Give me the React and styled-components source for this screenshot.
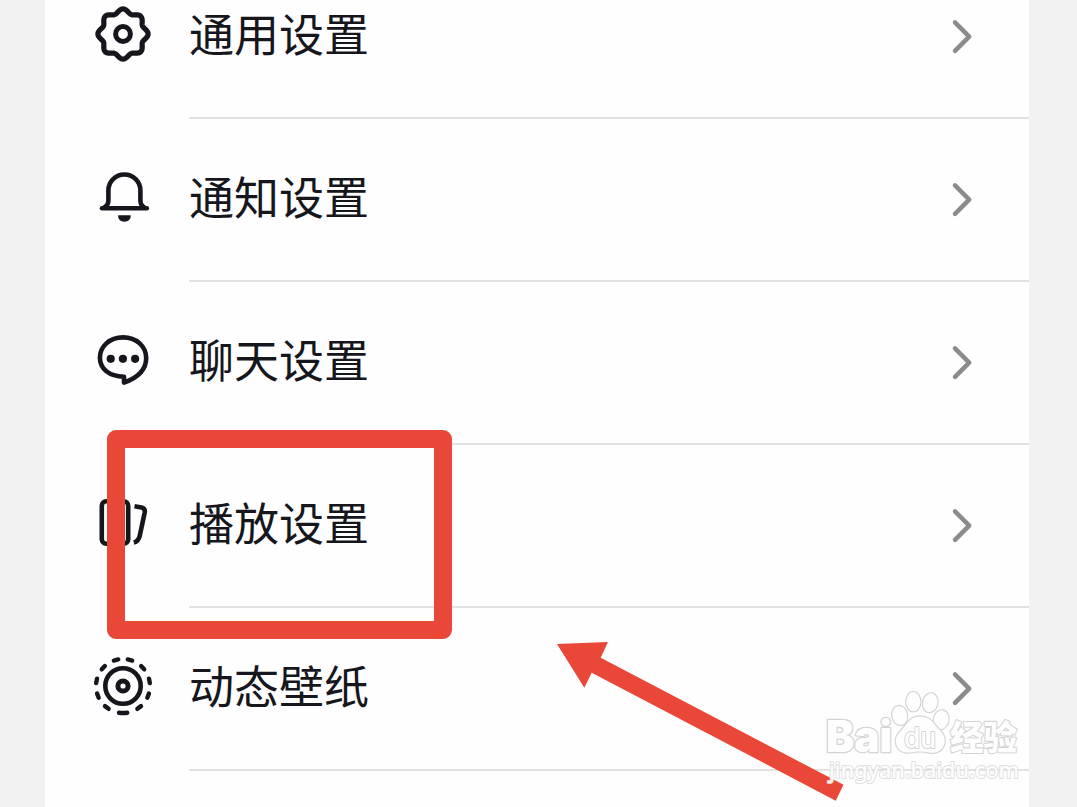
import React from 'react';
import styled, { createGlobalStyle } from 'styled-components';

const INK = '#16161d';
const RED = '#e94738';

const GlobalStyle = createGlobalStyle`
  body {
    margin: 0;
    background-color: #f2f2f2;
  }
`;

const Screen = styled.div`
  position: relative;
  box-sizing: border-box;
  width: 1077px;
  height: 807px;
  padding: 0 48px 0 45px;
  overflow: hidden;
  background-color: #f2f2f2;
`;

const Panel = styled.main`
  height: 100%;
  overflow: hidden;
  background-color: #fefefe;
`;

// the list is scrolled a bit, so the first row is cut by the top edge
const List = styled.ul`
  list-style-type: none;
  margin: -44px 0 0;
  padding: 0;
`;

const ListItem = styled.li`
  display: flex;
  align-items: center;
  height: 163px;
  padding-left: 48px;
`;

const IconSlot = styled.div`
  flex: none;
  width: 60px;
  height: 61px;
  margin: 0 36px 2px 0;

  svg {
    display: block;
    overflow: visible;
  }
`;

const Content = styled.div`
  box-sizing: border-box;
  display: flex;
  flex: 1;
  align-items: center;
  justify-content: space-between;
  height: 100%;
  padding: 0 56px 0 0;
  border-bottom: 2px solid #e2e2e2;
`;

const Label = styled.span`
  margin-bottom: 7px;
  color: ${INK};
  font-family: "Noto Sans CJK SC", sans-serif;
  font-size: 45px;
  line-height: 60px;
`;

const Overlay = styled.svg`
  position: absolute;
  top: 0;
  left: 0;
  pointer-events: none;
`;

const Highlight = styled.div`
  position: absolute;
  top: 430px;
  left: 107px;
  box-sizing: border-box;
  width: 345px;
  height: 209px;
  border: 18px solid ${RED};
  border-radius: 9px;
`;

const polar = (r, deg) => {
  const a = (deg * Math.PI) / 180;
  return [30 + r * Math.cos(a), 28 + r * Math.sin(a)];
};

const gearPoints = Array.from({ length: 180 }, (_, i) => {
  const deg = i * 2;
  return polar(23.1 + 2 * Math.cos((8 * deg * Math.PI) / 180), deg)
    .map(n => n.toFixed(2))
    .join(',');
}).join(' ');

const Icon = ({ children }) => (
  <svg width="60" height="61" viewBox="0 0 60 61" fill="none" stroke={INK}
      strokeWidth="4.6" strokeLinecap="round" strokeLinejoin="round">
    {children}
  </svg>
);

const GearIcon = () => (
  <Icon>
    <polygon points={gearPoints} strokeWidth="5.2" />
    <circle cx="30" cy="28" r="7.4" strokeWidth="5" />
  </Icon>
);

const BellIcon = () => (
  <Icon>
    <path d="M9 39.2H53.8" />
    <path d="M11 38.5Q15.4 36.5 15.4 31.5V21.5A16 16 0 0 1 47.4 21.5V31.5Q47.4 36.5 51.5 38.5" />
    <path d="M25.2 46.3H37.6C38.2 50.3 35 52.7 31.4 52.7S24.6 50.3 25.2 46.3Z" fill={INK} stroke="none" />
  </Icon>
);

const ChatIcon = () => (
  <Icon>
    <path d="M30 5.4C16.5 5.4 6.9 14.5 6.9 25.8C6.9 36.8 16 44.3 31 44.8V50.6C44 46 53.2 38 53.2 26C53.2 14.5 43.5 5.4 30 5.4Z" />
    <g fill={INK} stroke="none">
      <circle cx="17.7" cy="26.8" r="4.1" />
      <circle cx="29.9" cy="26.8" r="4.1" />
      <circle cx="42.1" cy="26.8" r="4.1" />
    </g>
  </Icon>
);

const PlaybackIcon = () => (
  <Icon>
    <rect x="8.8" y="6.2" width="26.4" height="42.6" rx="4.5" />
    <path d="M41.5 11.2L48.5 12.4Q52.4 13.5 51.7 17.5L46.8 40.5Q45.5 46.5 40.8 47.6" strokeLinecap="butt" />
  </Icon>
);

const dashAngles = [-75, -43, -11, 21, 53, 127, 159, 191, 223, 255];

const WallpaperIcon = () => (
  <Icon>
    <circle cx="30" cy="28" r="17.7" strokeWidth="4.6" />
    <circle cx="30" cy="28" r="5.1" strokeWidth="5" />
    {dashAngles.map(deg => {
      const [x1, y1] = polar(27, deg - 4.8);
      const [x2, y2] = polar(27, deg + 4.8);
      return <path key={deg} d={`M${x1} ${y1}L${x2} ${y2}`} strokeWidth="4.4" />;
    })}
    <path d="M26 54.7Q30 55.2 34.2 54.7" strokeWidth="4.4" />
  </Icon>
);

const Chevron = () => (
  <svg width="22" height="36" viewBox="0 0 22 36" fill="none" stroke="#8b8b8b"
      strokeWidth="4.5" strokeLinecap="round" strokeLinejoin="round">
    <path d="M4 3.4L18.2 17.6L4 31.8" />
  </svg>
);

// fills sit on top of the strokes, so only a thin outer line is left
const Watermark = () => (
  <g fill="#fff" stroke="#d0d0d0" strokeWidth="2.6" strokeLinejoin="round" paintOrder="stroke" opacity="0.9">
    <g strokeWidth="2.4">
      <ellipse cx="899.7" cy="715.5" rx="7.4" ry="9.5" transform="rotate(-12 899.7 715.5)" />
      <ellipse cx="913.3" cy="701.7" rx="7" ry="9.6" />
      <ellipse cx="930.2" cy="702.7" rx="7.2" ry="9.4" transform="rotate(12 930.2 702.7)" />
      <ellipse cx="941.2" cy="719.7" rx="7.3" ry="9.4" transform="rotate(10 941.2 719.7)" />
      <path d="M919.5 716.5C911 716.5 907.5 723 903 728.5C898 734 895 737 896 743C897.5 752 906 753.5 912 752.2C917 751 924 751.3 929 752.5C937 754 944.5 750 944.7 741C944.8 733 939 730 935.5 725.5C932 720.5 928 716.5 919.5 716.5Z" />
    </g>
    <text x="826" y="751.5" fontSize="44" fontWeight="900" textLength="66" lengthAdjust="spacingAndGlyphs"
        fontFamily="Inter, sans-serif">Bai</text>
    <text x="904" y="747.5" fontSize="28" fontWeight="500" textLength="32" lengthAdjust="spacingAndGlyphs"
        strokeWidth="2" fontFamily="Inter, sans-serif">du</text>
    <text x="950" y="749.5" fontSize="34" fontWeight="900" textLength="67" lengthAdjust="spacingAndGlyphs"
        strokeWidth="2.2" fontFamily="Noto Sans CJK SC, sans-serif">经验</text>
    <text x="829" y="777.5" fontSize="22.5" fontWeight="500" textLength="190" lengthAdjust="spacingAndGlyphs"
        strokeWidth="2" stroke="#dcdcdc" fontFamily="Noto Sans, sans-serif">jingyan.baidu.com</text>
  </g>
);

const items = [
  { label: '通用设置', icon: GearIcon },
  { label: '通知设置', icon: BellIcon },
  { label: '聊天设置', icon: ChatIcon },
  { label: '播放设置', icon: PlaybackIcon },
  { label: '动态壁纸', icon: WallpaperIcon },
];

const renderListItem = ({ label, icon: ItemIcon }) => (
  <ListItem key={label}>
    <IconSlot><ItemIcon /></IconSlot>
    <Content>
      <Label>{label}</Label>
      <Chevron />
    </Content>
  </ListItem>
);

export default function App() {
  return (
    <>
      <GlobalStyle />
      <Screen>
        <Panel>
          <List>{items.map(renderListItem)}</List>
        </Panel>
        <Highlight />
        <Overlay width="1077" height="807" viewBox="0 0 1077 807">
          <path fill={RED} d="M557 644L608 642L600.7 657.7L843.5 784.8L835.7 800.7L591.7 672.7L584.3 687.7Z" />
          <Watermark />
        </Overlay>
      </Screen>
    </>
  );
}
